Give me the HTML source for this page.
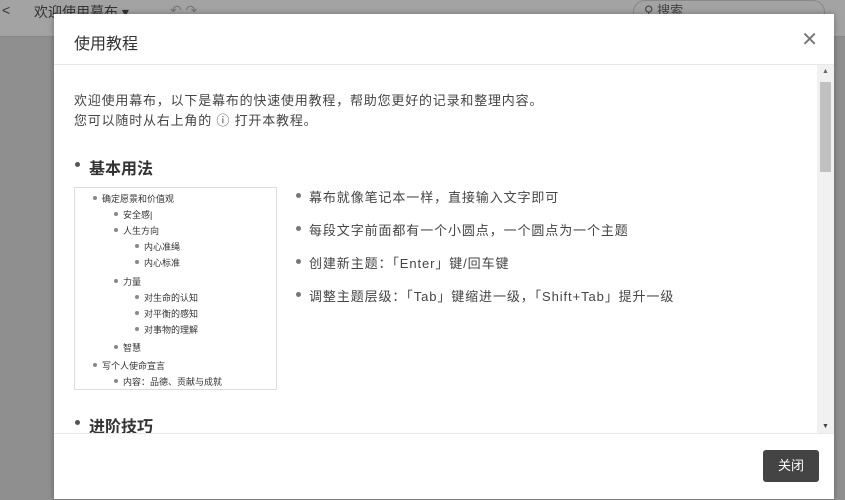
<!DOCTYPE html><html><head><meta charset="utf-8"><style>
body{margin:0;width:845px;height:499px;overflow:hidden;background:#8f8f8f;font-family:"Liberation Sans","Noto Sans CJK SC",sans-serif;position:relative}
.top{position:absolute;left:0;top:0;width:845px;height:36px;background:#a3a3a3;border-bottom:1px solid #888}
.top span{position:absolute;top:2px;font-size:14px;color:#333}
.modal{position:absolute;left:54px;top:14px;width:780px;height:485px;background:#fff;box-shadow:0 0 6px rgba(0,0,0,.3)}
.hd{height:50px;border-bottom:1px solid #e8e8e8;position:relative}
.hd .t{position:absolute;left:20px;top:16px;font-size:16px;color:#333}
.hd .x{position:absolute;right:16px;top:13px;font-size:20px;font-weight:100;color:#777}
.bd{position:absolute;top:51px;left:0;width:763px;height:368px;overflow:hidden}
.sb{position:absolute;right:0;top:51px;width:17px;height:368px;background:#f1f1f1}
.sb .th{position:absolute;left:3px;top:17px;width:11px;height:90px;background:#c1c1c1}
.ft{position:absolute;top:419px;left:0;width:780px;height:66px;border-top:1px solid #e8e8e8}
.btn{position:absolute;right:15px;top:16px;width:56px;height:32px;background:#444;color:#fff;border-radius:3px;font-size:13px;text-align:center;line-height:32px}
p{margin:0;font-size:13px;color:#444;line-height:20px;letter-spacing:0.8px}
h3{margin:0;font-size:16px;font-weight:bold;color:#333;position:absolute;left:35px}
h3:before{content:"";position:absolute;left:-14px;top:7px;width:5px;height:5px;border-radius:50%;background:#555}
.box{position:absolute;left:20px;top:122px;width:201px;height:201px;border:1px solid #ddd;font-size:9px;color:#333}
.box div{position:absolute;white-space:nowrap}
.box div:before{content:"";position:absolute;left:-9px;top:4px;width:4px;height:4px;border-radius:50%;background:#888}
.li{position:absolute;left:255px;font-size:13px;color:#444;letter-spacing:0.9px}
.li:before{content:"";position:absolute;left:-13px;top:6px;width:5px;height:5px;border-radius:50%;background:#777}
</style></head><body>
<div class="top"><span style="left:2px">&lt;</span><span style="left:34px">欢迎使用幕布 ▾</span><span style="left:170px;color:#777">↶ ↷</span>
<div style="position:absolute;left:633px;top:0;width:180px;height:22px;border:1px solid #888;border-radius:12px;font-size:13px;color:#444;padding-left:10px;line-height:20px">⚲ 搜索</div></div>
<div class="modal">
<div class="hd"><div class="t">使用教程</div><div class="x">✕</div></div>
<div class="bd">
<p style="position:absolute;left:20px;top:26px">欢迎使用幕布，以下是幕布的快速使用教程，帮助您更好的记录和整理内容。<br>您可以随时从右上角的 ⓘ 打开本教程。</p>
<h3 style="top:90px">基本用法</h3>
<div class="box">
<div style="left:27px;top:4px">确定愿景和价值观</div>
<div style="left:48px;top:20px">安全感|</div>
<div style="left:48px;top:36px">人生方向</div>
<div style="left:69px;top:52px">内心准绳</div>
<div style="left:69px;top:68px">内心标准</div>
<div style="left:48px;top:87px">力量</div>
<div style="left:69px;top:103px">对生命的认知</div>
<div style="left:69px;top:119px">对平衡的感知</div>
<div style="left:69px;top:135px">对事物的理解</div>
<div style="left:48px;top:153px">智慧</div>
<div style="left:27px;top:171px">写个人使命宣言</div>
<div style="left:48px;top:187px">内容：品德、贡献与成就</div>
</div>
<div class="li" style="top:122px">幕布就像笔记本一样，直接输入文字即可</div>
<div class="li" style="top:155px">每段文字前面都有一个小圆点，一个圆点为一个主题</div>
<div class="li" style="top:188px">创建新主题：「Enter」键/回车键</div>
<div class="li" style="top:221px">调整主题层级：「Tab」键缩进一级，「Shift+Tab」提升一级</div>
<h3 style="top:348px">进阶技巧</h3>
</div>
<div class="sb"><div style="position:absolute;left:5px;top:3px;font-size:7px;color:#666">▲</div><div class="th"></div><div style="position:absolute;left:5px;bottom:3px;font-size:7px;color:#444">▼</div></div>
<div class="ft"><div class="btn">关闭</div></div>
</div>
</body></html>
